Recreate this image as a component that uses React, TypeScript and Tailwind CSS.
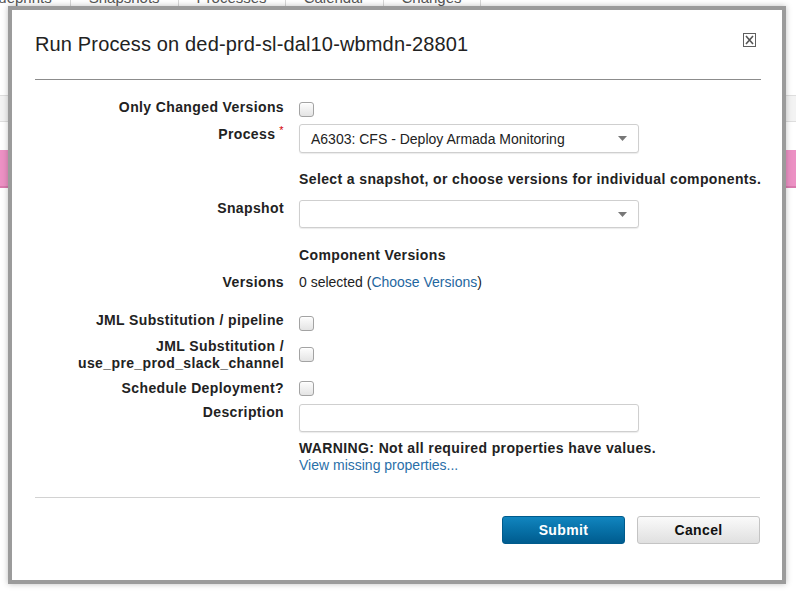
import { ReactNode } from "react";

const tabs = ["Blueprints", "Snapshots", "Processes", "Calendar", "Changes"];

function Checkbox() {
  return (
    <span className="block w-[15px] h-[15px] rounded-[3px] border border-[#a3a3a3] bg-gradient-to-b from-[#fdfdfd] to-[#e4e4e4] shadow-[inset_0_1px_0_#fff]" />
  );
}

function Caret() {
  return (
    <svg width="9" height="5" viewBox="0 0 9 5" className="shrink-0">
      <path d="M0 0 L9 0 L4.5 5 Z" fill="#777" />
    </svg>
  );
}

function Select({ value }: { value?: string }) {
  return (
    <div className="w-[340px] h-full flex items-center justify-between pl-[11px] pr-[11px] rounded-[3px] border border-[#cfcfcf] bg-white shadow-[0_1px_1px_rgba(0,0,0,0.08)]">
      <span className="text-[14px] text-[#222] leading-none">{value}</span>
      <Caret />
    </div>
  );
}

function Row({
  label,
  children,
  className,
  labelClass,
}: {
  label?: ReactNode;
  children?: ReactNode;
  className?: string;
  labelClass?: string;
}) {
  return (
    <div className={"flex " + (className ?? "")}>
      <div
        className={
          "w-[249px] shrink-0 text-right font-bold text-[14px] leading-[17px] tracking-[0.38px] text-[#222] " +
          (labelClass ?? "")
        }
      >
        {label}
      </div>
      <div className="ml-[15px] flex-1">{children}</div>
    </div>
  );
}

export default function App() {
  return (
    <div
      className="relative w-[796px] h-[591px] overflow-hidden bg-white"
      style={{ fontFamily: '"Liberation Sans", Arial, sans-serif' }}
    >
      {/* page behind the dialog */}
      <div className="-mt-[15px] h-[26px] flex">
        {tabs.map((t, i) => (
          <div
            key={t}
            className={
              "px-[18px] leading-[26px] text-[15px] text-[#555] border-r border-[#d8d8d8] " +
              (i === 0 ? "-ml-[33px]" : "")
            }
          >
            {t}
          </div>
        ))}
      </div>
      <div className="mt-[84px] h-[27px] bg-[#f3f3f3] border-y border-[#dedede]" />
      <div className="mt-[28px] h-[38px] bg-[#ec91c4] border-b-2 border-[#d97aae]" />

      {/* dialog */}
      <div className="absolute left-[8px] top-[6px] w-[778px] h-[578px] border-4 border-[#9b9b9b] bg-white shadow-[0_0_6px_rgba(0,0,0,0.25)]">
        <div className="flex items-start justify-between pt-[22px] pl-[23px] pr-[26px]">
          <h1 className="text-[20px] leading-[24px] tracking-[0.15px] text-[#222]">
            Run Process on ded-prd-sl-dal10-wbmdn-28801
          </h1>
          <svg width="13" height="14" viewBox="0 0 13 14" className="mt-[1px]">
            <rect x="0.5" y="0.5" width="12" height="13" fill="#fff" stroke="#5f5f5f" />
            <path d="M3 3 L10 11 M10 3 L3 11" stroke="#555" strokeWidth="1.6" />
          </svg>
        </div>
        <div className="mt-[23px] ml-[23px] mr-[21px] h-px bg-[#8c8c8c]" />

        <div className="pl-[23px] pr-[21px]">
          <Row label="Only Changed Versions" className="mt-[19px]">
            <div className="mt-[3px]">
              <Checkbox />
            </div>
          </Row>

          <Row
            className="mt-[7px] h-[29px]"
            labelClass="pt-[2px]"
            label={
              <>
                Process
                <span className="ml-[4px] text-[11px] font-normal text-[#d40000] relative -top-[5px]">*</span>
              </>
            }
          >
            <Select value="A6303: CFS - Deploy Armada Monitoring" />
          </Row>

          <Row className="mt-[18px]">
            <div className="font-bold text-[14px] leading-[17px] tracking-[0.38px] text-[#222] whitespace-nowrap">
              Select a snapshot, or choose versions for individual components.
            </div>
          </Row>

          <Row label="Snapshot" className="mt-[12px] h-[28px]">
            <Select />
          </Row>

          <Row className="mt-[19px]">
            <div className="font-bold text-[14px] leading-[17px] tracking-[0.38px] text-[#222]">
              Component Versions
            </div>
          </Row>

          <Row label="Versions" className="mt-[10px]">
            <div className="text-[14px] leading-[17px] text-[#222]">
              0 selected (<span className="text-[#1f67a0]">Choose Versions</span>)
            </div>
          </Row>

          <Row label="JML Substitution / pipeline" className="mt-[21px]">
            <div className="mt-[4px]">
              <Checkbox />
            </div>
          </Row>

          <Row
            className="mt-[7px]"
            label={
              <>
                JML Substitution /
                <br />
                use_pre_prod_slack_channel
              </>
            }
          >
            <div className="mt-[9px]">
              <Checkbox />
            </div>
          </Row>

          <Row label="Schedule Deployment?" className="mt-[8px]">
            <div className="mt-[1px]">
              <Checkbox />
            </div>
          </Row>

          <Row label="Description" className="mt-[7px]">
            <div className="w-[340px] h-[28px] rounded-[3px] border border-[#cfcfcf] bg-white shadow-[0_1px_1px_rgba(0,0,0,0.08)]" />
            <div className="mt-[8px] font-bold text-[14px] leading-[17px] tracking-[0.38px] text-[#222] whitespace-nowrap">
              WARNING: Not all required properties have values.
            </div>
            <div className="text-[14px] leading-[17px] text-[#2a6fa8]">View missing properties...</div>
          </Row>
        </div>

        <div className="mt-[23px] ml-[23px] mr-[22px] h-px bg-[#d2d2d2]" />

        <div className="mt-[18px] pr-[22px] flex justify-end gap-[12px]">
          <button className="w-[123px] h-[28px] rounded-[3px] bg-gradient-to-b from-[#1185bf] to-[#005c8f] border border-[#005b8c] text-white font-bold text-[14px] tracking-[0.38px]">
            Submit
          </button>
          <button className="w-[123px] h-[28px] rounded-[3px] bg-gradient-to-b from-[#fafafa] to-[#e0e0e0] border border-[#c4c4c4] text-[#111] font-bold text-[14px] tracking-[0.38px]">
            Cancel
          </button>
        </div>
      </div>
    </div>
  );
}
